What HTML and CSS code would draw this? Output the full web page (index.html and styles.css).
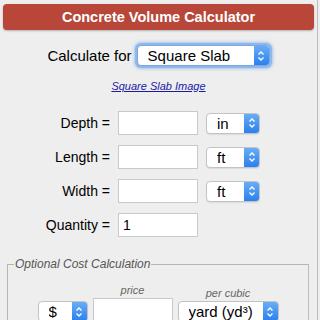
FILE: index.html
```html
<!DOCTYPE html>
<html lang="en">
<head>
    <meta charset="UTF-8">
    <meta name="viewport" content="width=device-width, initial-scale=1.0">
    <title>Concrete Volume Calculator</title>
    <link rel="stylesheet" href="styles.css">
</head>
<body>
    <div class="container">
        <div class="header">Concrete Volume Calculator</div>

        <div class="calc-for">
            <label for="shape">Calculate for</label>
            <span class="select shape focused">
                <select id="shape">
                    <option>Square Slab</option>
                    <option>Round Slab</option>
                    <option>Wall</option>
                </select>
                <span class="arrows"><svg width="8" height="12" viewBox="0 0 8 12"><path d="M1.5 4.5L4 2L6.5 4.5M1.5 7.5L4 10L6.5 7.5" fill="none" stroke="#fff" stroke-width="1.4"/></svg></span>
            </span>
        </div>

        <p class="image-link"><a href="#">Square Slab Image</a></p>

        <div class="fields">
            <label for="depth">Depth =</label>
            <input type="text" id="depth">
            <span class="select unit">
                <select><option>in</option><option>ft</option></select>
                <span class="arrows"><svg width="8" height="12" viewBox="0 0 8 12"><path d="M1.5 4.5L4 2L6.5 4.5M1.5 7.5L4 10L6.5 7.5" fill="none" stroke="#fff" stroke-width="1.4"/></svg></span>
            </span>

            <label for="length">Length =</label>
            <input type="text" id="length">
            <span class="select unit">
                <select><option>ft</option><option>in</option></select>
                <span class="arrows"><svg width="8" height="12" viewBox="0 0 8 12"><path d="M1.5 4.5L4 2L6.5 4.5M1.5 7.5L4 10L6.5 7.5" fill="none" stroke="#fff" stroke-width="1.4"/></svg></span>
            </span>

            <label for="width">Width =</label>
            <input type="text" id="width">
            <span class="select unit">
                <select><option>ft</option><option>in</option></select>
                <span class="arrows"><svg width="8" height="12" viewBox="0 0 8 12"><path d="M1.5 4.5L4 2L6.5 4.5M1.5 7.5L4 10L6.5 7.5" fill="none" stroke="#fff" stroke-width="1.4"/></svg></span>
            </span>

            <label for="quantity">Quantity =</label>
            <input type="text" id="quantity" value="1">
        </div>

        <fieldset class="cost">
            <legend>Optional Cost Calculation</legend>
            <div class="cost-row">
                <div class="cost-col">
                    <span class="select currency">
                        <select><option>$</option><option>€</option></select>
                        <span class="arrows"><svg width="8" height="12" viewBox="0 0 8 12"><path d="M1.5 4.5L4 2L6.5 4.5M1.5 7.5L4 10L6.5 7.5" fill="none" stroke="#fff" stroke-width="1.4"/></svg></span>
                    </span>
                </div>
                <div class="cost-col">
                    <span class="hint">price</span>
                    <input type="text" class="price">
                </div>
                <div class="cost-col">
                    <span class="hint">per cubic</span>
                    <span class="select per">
                        <select><option>yard (yd³)</option><option>meter (m³)</option></select>
                        <span class="arrows"><svg width="8" height="12" viewBox="0 0 8 12"><path d="M1.5 4.5L4 2L6.5 4.5M1.5 7.5L4 10L6.5 7.5" fill="none" stroke="#fff" stroke-width="1.4"/></svg></span>
                    </span>
                </div>
            </div>
        </fieldset>
    </div>
</body>
</html>
```

FILE: styles.css
```css
* {
    margin: 0;
    padding: 0;
    box-sizing: border-box;
}

body {
    font-family: 'Liberation Sans', Arial, sans-serif;
    background: #eeeeee;
    color: #000;
    overflow: hidden;
}

.container {
    width: 318px;
    height: 100vh;
    overflow: hidden;
    border-right: 1px solid #bdbdbd;
    padding: 4px 3px 0 3px;
}

.header {
    height: 26px;
    line-height: 26px;
    background: #b8473a;
    border-radius: 4px;
    box-shadow: 0 1px 2px rgba(0, 0, 0, 0.25);
    color: white;
    font-weight: bold;
    font-size: 14.5px;
    text-align: center;
}

.calc-for {
    display: flex;
    align-items: center;
    justify-content: center;
    gap: 5px;
    margin-top: 15px;
    font-size: 15px;
}

.image-link {
    text-align: center;
    margin-top: 14px;
    font-size: 11px;
    font-style: italic;
}

.image-link a {
    color: #1a1aa6;
}

.fields {
    display: grid;
    grid-template-columns: 107px 80px 54px;
    column-gap: 8px;
    row-gap: 10px;
    align-items: center;
    margin-top: 19px;
    font-size: 14px;
}

.fields label {
    text-align: right;
}

input[type="text"] {
    height: 24px;
    border: 1px solid #c9c9c9;
    background: white;
    font-family: inherit;
    font-size: 14px;
    padding: 0 4px;
    outline: none;
}

.fields input {
    width: 80px;
}

.select {
    position: relative;
    display: inline-block;
    height: 21px;
}

.select select {
    appearance: none;
    -webkit-appearance: none;
    width: 100%;
    height: 100%;
    border: 1px solid #c3c3c3;
    border-radius: 4px;
    background: white;
    font-family: inherit;
    font-size: 15px;
    color: #000;
    padding: 0 0 0 10px;
    box-shadow: 0 1px 1px rgba(0, 0, 0, 0.08);
    outline: none;
}

.select .arrows {
    position: absolute;
    top: 1px;
    right: 1px;
    bottom: 1px;
    width: 15px;
    background: linear-gradient(#68adf6, #2a80ee);
    border-radius: 0 3px 3px 0;
    display: flex;
    align-items: center;
    justify-content: center;
    pointer-events: none;
}

.select.focused select {
    box-shadow: 0 0 0 2px #8cb8ec, 0 0 3px 3px rgba(100, 160, 230, 0.5);
    border-color: #7aa7e0;
}

.shape {
    width: 133px;
}

.unit {
    width: 54px;
}

.cost {
    margin: 20px 5px 0 4px;
    border: 1px solid #b5b5b5;
    border-right-color: #bcbcbc;
    padding: 0 8px 10px;
    height: 80px;
}

.cost legend {
    font-size: 12px;
    font-style: italic;
    color: #555;
    padding: 0 1px;
    margin-left: -2px;
}

.cost-row {
    display: flex;
    justify-content: center;
    align-items: flex-end;
    gap: 5px;
    margin-top: 13px;
}

.cost-col {
    display: flex;
    flex-direction: column;
    align-items: center;
    gap: 2px;
}

.hint {
    font-size: 11px;
    font-style: italic;
    color: #666;
}

.cost input.price {
    width: 80px;
}

.currency {
    width: 50px;
}

.per {
    width: 101px;
}
```
